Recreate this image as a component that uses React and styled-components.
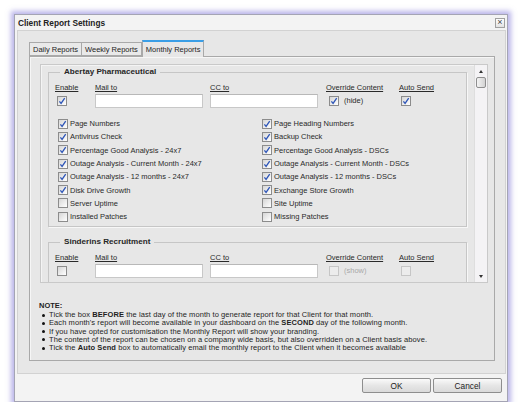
import React from 'react';
import styled, { createGlobalStyle } from 'styled-components';

const GlobalStyle = createGlobalStyle`
  html, body {
    margin: 0;
    padding: 0;
    background: #ffffff;
  }
  body {
    font-family: "Liberation Sans", Arial, sans-serif;
    font-size: 7.5px;
    color: #1e1e1e;
  }
  * {
    box-sizing: border-box;
  }
`;

const Page = styled.div`
  padding: 14px 0 0 14px;
`;

const Dialog = styled.div`
  width: 494px;
  height: 388px;
  background: #f3f3f3;
  border: 1px solid #a4a4b4;
  box-shadow: 0 0 5px 3px rgba(118, 108, 214, 0.5);
  display: flex;
  flex-direction: column;
`;

const TitleBar = styled.div`
  height: 15px;
  display: flex;
  align-items: center;
  justify-content: space-between;
  padding: 0 2px 0 3px;
`;

const Title = styled.span`
  font-weight: bold;
  font-size: 8.3px;
  color: #222;
`;

const CloseButton = styled.span`
  width: 10px;
  height: 10px;
  border: 1px solid #a0a0a0;
  background: linear-gradient(#ffffff, #e2e2e2);
  display: flex;
  align-items: center;
  justify-content: center;
  color: #444;
  font-size: 9px;
  line-height: 1;
`;

const Body = styled.div`
  margin: 0 1px 0 2px;
  height: 344px;
  background: #e7e7e7;
  border: 1px solid #d2d2d2;
  padding: 9px 10px 0 11px;
  display: flex;
  flex-direction: column;
`;

const TabStrip = styled.div`
  display: flex;
  align-items: flex-end;
  height: 16px;
`;

const Tab = styled.div`
  height: ${p => (p.$active ? '17px' : '14px')};
  margin-bottom: ${p => (p.$active ? '-1px' : '0')};
  padding: 0 3px;
  display: flex;
  align-items: center;
  border: 1px solid #a9a9a9;
  border-left: ${p => (p.$first || p.$active ? '1px solid #a9a9a9' : 'none')};
  border-bottom: ${p => (p.$active ? 'none' : '1px solid #a9a9a9')};
  border-top: ${p => (p.$active ? '2px solid #3a9ee6' : '1px solid #a9a9a9')};
  background: ${p => (p.$active ? '#e7e7e7' : '#e9e9e9')};
  position: relative;
  z-index: ${p => (p.$active ? 1 : 0)};
`;

const TabPanel = styled.div`
  height: 305px;
  width: 466px;
  border: 1px solid #a9a9a9;
  box-shadow: inset 1px 1px 0 #f6f6f6;
  padding: 7px 6px 0 10px;
  display: flex;
  flex-direction: column;
`;

const ScrollArea = styled.div`
  height: 219px;
  flex: none;
  border: 1px solid #c9c9c9;
  box-shadow: inset 1px 1px 0 #f4f4f4;
  display: flex;
  overflow: hidden;
`;

const ScrollContent = styled.div`
  flex: 1;
  padding: 2px 7px 0 7px;
  overflow: hidden;
`;

const Group = styled.fieldset`
  margin: ${p => (p.$first ? '0' : '10px')} 0 0 0;
  padding: 6px 6px 3px 6px;
  border: 1px solid #c6c6c6;
  box-shadow: 1px 1px 0 #f7f7f7;
  min-width: 0;
  min-height: ${p => (p.$collapsed ? '70px' : '0')};
  width: 419px;
`;

const Legend = styled.legend`
  font-weight: bold;
  font-size: 8.1px;
  line-height: 10px;
  padding: 0 4px;
  margin-left: 5px;
  color: #262626;
`;

const HeaderGrid = styled.div`
  display: grid;
  grid-template-columns: 40px 115px 116px 73px 1fr;
  align-items: center;
`;

const ColLabel = styled.span`
  text-decoration: underline;
  line-height: 10px;
  height: 10px;
  color: #2a2a2a;
`;

const Cell = styled.div`
  height: 15px;
  display: flex;
  align-items: center;
  gap: 5px;
  padding-left: ${p => p.$indent || 0}px;
`;

const TextField = styled.div`
  width: ${p => p.$w}px;
  height: 14px;
  background: #ffffff;
  border: 1px solid #c8c8c8;
  border-top-color: #b8b8b8;
`;

const Muted = styled.span`
  color: ${p => (p.$disabled ? '#a8a8a8' : '#2a2a2a')};
`;

const Options = styled.div`
  display: grid;
  grid-template-columns: 204px 1fr;
  margin-top: 9px;
  padding-left: 3px;
`;

const OptionColumn = styled.div`
  display: flex;
  flex-direction: column;
`;

const Option = styled.label`
  height: 13.3px;
  display: flex;
  align-items: center;
  gap: 2px;
  color: #2a2a2a;
`;

const Box = styled.span`
  width: 10px;
  height: 10px;
  flex: none;
  display: inline-flex;
  align-items: center;
  justify-content: center;
  border: 1px solid ${p => (p.$disabled ? '#c6c6c6' : '#8c8c8c')};
  background: ${p => (p.$disabled ? '#ececec' : 'linear-gradient(135deg, #d6d6d6, #ffffff)')};
`;

const Scrollbar = styled.div`
  width: 13px;
  background: #f4f3f5;
  border-left: 1px solid #dedede;
  display: flex;
  flex-direction: column;
  align-items: center;
  padding-top: 5px;
`;

const Arrow = styled.span`
  width: 0;
  height: 0;
  border-left: 2.5px solid transparent;
  border-right: 2.5px solid transparent;
  ${p => (p.$down ? 'border-top: 3px solid #333;' : 'border-bottom: 3px solid #333;')}
`;

const Thumb = styled.div`
  width: 10px;
  height: 11px;
  margin-top: 4px;
  border: 1px solid #8e8e8e;
  border-radius: 2px;
  background: linear-gradient(90deg, #f4f4f4, #d2d2d2);
`;

const Spacer = styled.div`
  flex: 1;
`;

const DownSlot = styled.div`
  height: 12px;
  display: flex;
  align-items: center;
`;

const Note = styled.div`
  padding: 18px 0 0 0;
  margin-left: -1px;
  color: #1e1e1e;
`;

const NoteTitle = styled.div`
  font-weight: bold;
  line-height: 10px;
`;

const NoteList = styled.ul`
  list-style: none;
  margin: 0;
  padding: 0;
`;

const NoteItem = styled.li`
  height: 8.25px;
  line-height: 8.25px;
  letter-spacing: 0.08px;
  display: flex;
  gap: 4px;
  &::before {
    content: '';
    width: 3px;
    height: 3px;
    border-radius: 50%;
    background: #111;
    margin: 2.6px 0 0 3px;
    flex: none;
  }
`;

const Footer = styled.div`
  flex: 1;
  display: flex;
  justify-content: flex-end;
  align-items: flex-start;
  gap: 2px;
  padding: 4px 5px 0 0;
`;

const Button = styled.button`
  width: 69px;
  height: 15px;
  padding: 0;
  font-family: "Liberation Sans", Arial, sans-serif;
  font-size: 8.3px;
  color: #222;
  border: 1px solid #8e8e8e;
  border-radius: 2px;
  background: linear-gradient(#fafafa, #e6e6e6 50%, #dadada);
`;

const Check = ({ checked, disabled }) => (
  <Box $disabled={disabled}>
    {checked && (
      <svg width="8" height="8" viewBox="0 0 8 8">
        <path d="M1.4 4.3 L3.1 6.4 L6.7 1.2" fill="none" stroke="#2e56b8" strokeWidth="1.3" />
      </svg>
    )}
  </Box>
);

const leftOptions = [
  ['Page Numbers', true],
  ['Antivirus Check', true],
  ['Percentage Good Analysis - 24x7', true],
  ['Outage Analysis - Current Month - 24x7', true],
  ['Outage Analysis - 12 months - 24x7', true],
  ['Disk Drive Growth', true],
  ['Server Uptime', false],
  ['Installed Patches', false],
];

const rightOptions = [
  ['Page Heading Numbers', true],
  ['Backup Check', true],
  ['Percentage Good Analysis - DSCs', true],
  ['Outage Analysis - Current Month - DSCs', true],
  ['Outage Analysis - 12 months - DSCs', true],
  ['Exchange Store Growth', true],
  ['Site Uptime', false],
  ['Missing Patches', false],
];

// the second client is scrolled off below its inputs, so its option list is left out
const ClientGroup = ({ name, enabled, first, showOptions }) => (
  <Group $first={first} $collapsed={!showOptions}>
    <Legend>{name}</Legend>
    <HeaderGrid>
      <ColLabel>Enable</ColLabel>
      <ColLabel>Mail to</ColLabel>
      <ColLabel>CC to</ColLabel>
      <ColLabel>Override Content</ColLabel>
      <ColLabel>Auto Send</ColLabel>
      <Cell $indent={2}>
        <Check checked={enabled} />
      </Cell>
      <Cell>
        <TextField $w={108} />
      </Cell>
      <Cell>
        <TextField $w={108} />
      </Cell>
      <Cell $indent={3}>
        <Check checked={enabled} disabled={!enabled} />
        <Muted $disabled={!enabled}>{enabled ? '(hide)' : '(show)'}</Muted>
      </Cell>
      <Cell $indent={2}>
        <Check checked={enabled} disabled={!enabled} />
      </Cell>
    </HeaderGrid>
    {showOptions && (
      <Options>
        <OptionColumn>
          {leftOptions.map(([label, on]) => (
            <Option key={label}>
              <Check checked={on} />
              {label}
            </Option>
          ))}
        </OptionColumn>
        <OptionColumn>
          {rightOptions.map(([label, on]) => (
            <Option key={label}>
              <Check checked={on} />
              {label}
            </Option>
          ))}
        </OptionColumn>
      </Options>
    )}
  </Group>
);

export default function App() {
  return (
    <>
      <GlobalStyle />
      <Page>
        <Dialog>
          <TitleBar>
            <Title>Client Report Settings</Title>
            <CloseButton>×</CloseButton>
          </TitleBar>
          <Body>
            <TabStrip>
              <Tab $first>Daily Reports</Tab>
              <Tab>Weekly Reports</Tab>
              <Tab $active>Monthly Reports</Tab>
            </TabStrip>
            <TabPanel>
              <ScrollArea>
                <ScrollContent>
                  <ClientGroup name="Abertay Pharmaceutical" enabled first showOptions />
                  <ClientGroup name="Sinderins Recruitment" enabled={false} />
                </ScrollContent>
                <Scrollbar>
                  <Arrow />
                  <Thumb />
                  <Spacer />
                  <DownSlot>
                    <Arrow $down />
                  </DownSlot>
                </Scrollbar>
              </ScrollArea>
              <Note>
                <NoteTitle>NOTE:</NoteTitle>
                <NoteList>
                  <NoteItem>
                    <span>
                      Tick the box <b>BEFORE</b> the last day of the month to generate report for that Client for that month.
                    </span>
                  </NoteItem>
                  <NoteItem>
                    <span>
                      Each month's report will become available in your dashboard on the <b>SECOND</b> day of the following month.
                    </span>
                  </NoteItem>
                  <NoteItem>
                    <span>If you have opted for customisation the Monthly Report will show your branding.</span>
                  </NoteItem>
                  <NoteItem>
                    <span>
                      The content of the report can be chosen on a company wide basis, but also overridden on a Client basis above.
                    </span>
                  </NoteItem>
                  <NoteItem>
                    <span>
                      Tick the <b>Auto Send</b> box to automatically email the monthly report to the Client when it becomes available
                    </span>
                  </NoteItem>
                </NoteList>
              </Note>
            </TabPanel>
          </Body>
          <Footer>
            <Button>OK</Button>
            <Button>Cancel</Button>
          </Footer>
        </Dialog>
      </Page>
    </>
  );
}
